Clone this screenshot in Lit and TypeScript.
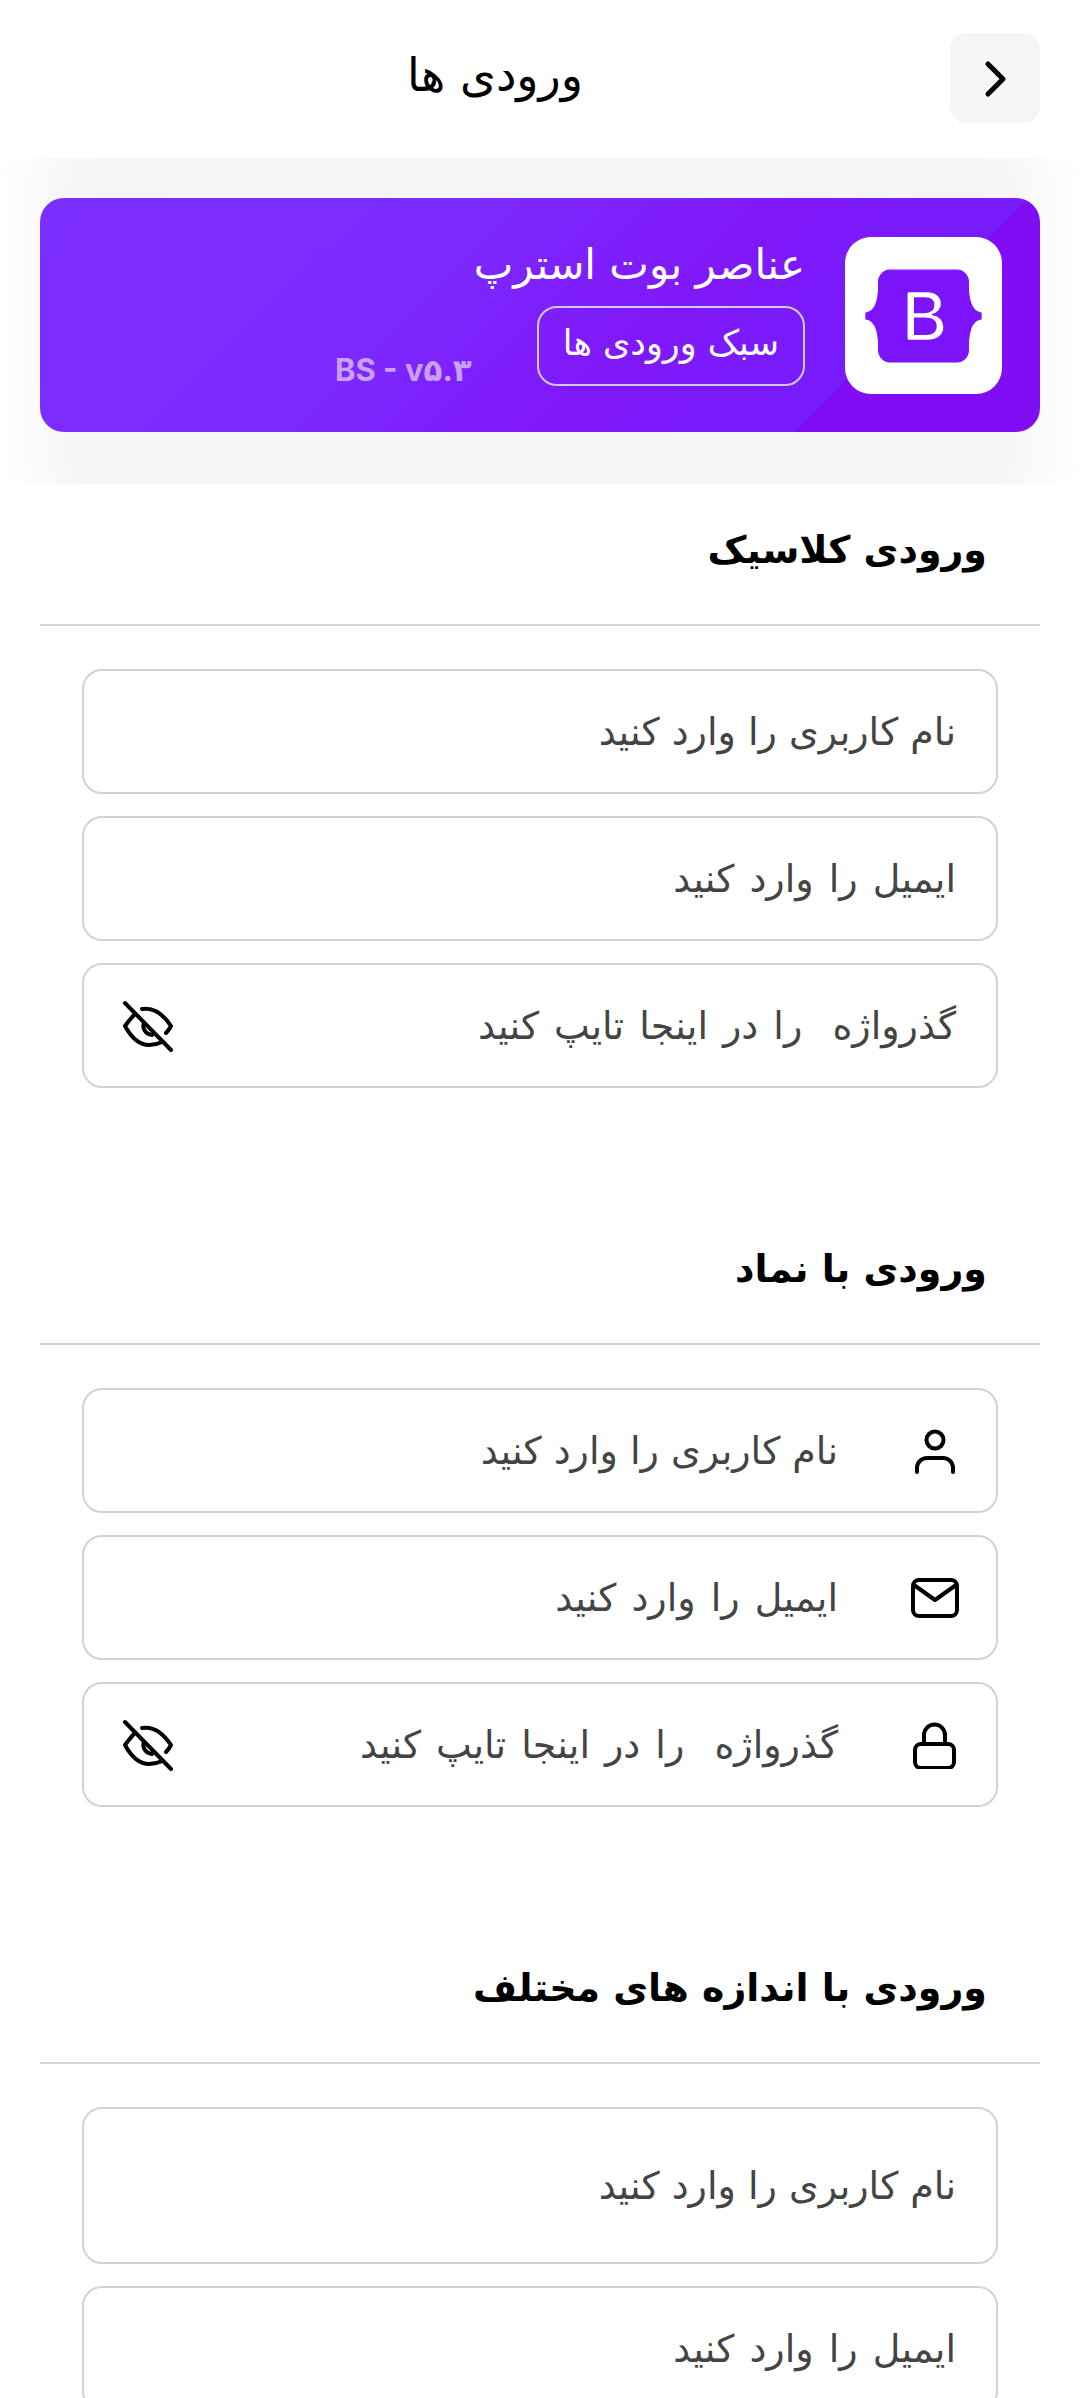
import { LitElement, html, css, svg } from 'lit';
import { customElement } from 'lit/decorators.js';

const icons = {
  user: svg`<circle cx="24" cy="13" r="8.5"/><path d="M6 45v-4a10 10 0 0 1 10-10h16a10 10 0 0 1 10 10v4"/>`,
  mail: svg`<rect x="2" y="6" width="44" height="36" rx="6"/><path d="M3 11l21 15 21-15"/>`,
  lock: svg`<rect x="4" y="23" width="39" height="24" rx="6"/><path d="M13 23v-9a10.500 10.500 0 0 1 21 0v9"/>`,
};

const eyeOff = svg`<path d="M20 9C31 7 41 14 49 26C48 28 46 31 44 33"/><path d="M12 15C9 18 6 22 3 26C9 37 17 45 27 45C32 45 36 44 40 42"/><path d="M22 23C20 28 23 34 30 35"/><path d="M3 3L49 50"/>`;

const sections = [
  {
    title: 'ورودی کلاسیک',
    fields: [
      { text: 'نام کاربری را وارد کنید' },
      { text: 'ایمیل را وارد کنید', wide: true },
      { text: 'گذرواژه  را در اینجا تایپ کنید', wide: true, eye: true },
    ],
  },
  {
    title: 'ورودی با نماد',
    fields: [
      { text: 'نام کاربری را وارد کنید', icon: 'user' },
      { text: 'ایمیل را وارد کنید', wide: true, icon: 'mail' },
      { text: 'گذرواژه  را در اینجا تایپ کنید', wide: true, icon: 'lock', eye: true },
    ],
  },
  {
    title: 'ورودی با اندازه های مختلف',
    fields: [
      { text: 'نام کاربری را وارد کنید', large: true },
      { text: 'ایمیل را وارد کنید', wide: true },
    ],
  },
];

@customElement('app-root')
export class AppRoot extends LitElement {
  static styles = css`
    :host {
      display: block;
      height: 2398px;
      overflow: hidden;
      background: #fff;
      font-family: "DejaVu Sans", sans-serif;
      color: #000;
    }

    .top {
      height: 158px;
      box-sizing: border-box;
      padding: 33px 40px 0;
      display: flex;
      align-items: flex-start;
    }
    .back {
      width: 90px;
      height: 90px;
      border-radius: 16px;
      background: #f5f5f5;
      display: flex;
      align-items: center;
      justify-content: center;
    }
    .back svg {
      width: 30px;
      height: 44px;
      fill: none;
      stroke: #000;
      stroke-width: 5;
      stroke-linecap: round;
      stroke-linejoin: round;
    }
    .page-title {
      flex: 1;
      text-align: center;
      font-size: 46px;
      line-height: 84px;
    }

    .banner {
      position: relative;
      height: 326px;
      box-sizing: border-box;
      padding: 40px 40px 0;
      overflow: hidden;
    }
    .banner::before {
      content: "";
      position: absolute;
      left: 40px;
      right: 40px;
      top: -30px;
      bottom: -30px;
      background: #f5f5f5;
      border-radius: 40px;
      filter: blur(26px);
    }
    .card {
      position: relative;
      height: 234px;
      box-sizing: border-box;
      padding: 39px 38px 0;
      border-radius: 24px;
      background: linear-gradient(135deg, #7c2dff 0%, #7b2bff 35%, #8018f9 60%, #761cfd 80%, #800df3 80%);
      display: flex;
      color: #fff;
    }
    .logo {
      width: 157px;
      height: 157px;
      border-radius: 26px;
      background: #fff;
      display: flex;
      align-items: center;
      justify-content: center;
      flex-shrink: 0;
    }
    .logo svg {
      width: 115px;
      height: 92px;
      overflow: visible;
      fill: #7b14fb;
      stroke: #7b14fb;
      stroke-width: 6;
    }
    .info {
      margin-right: 40px;
      display: flex;
      flex-direction: column;
      align-items: flex-start;
    }
    .name {
      font-size: 42px;
      line-height: 56px;
      margin-bottom: 13px;
    }
    .tag {
      height: 80px;
      box-sizing: border-box;
      padding: 0 24px;
      border: 2px solid #d0c8dc;
      border-radius: 20px;
      font-size: 35px;
      line-height: 70px;
    }
    .version {
      align-self: flex-end;
      margin: 0 2px 43px 0;
      font-family: Inter, "DejaVu Sans", sans-serif;
      font-weight: 700;
      font-size: 31px;
      line-height: 38px;
      color: #c9a0ff;
    }

    .section {
      padding-bottom: 115px;
    }
    .section-head {
      height: 142px;
      box-sizing: border-box;
      margin: 0 40px;
      padding: 0 53px 8px;
      border-bottom: 2px solid #d4d4d4;
      display: flex;
      align-items: center;
      font-size: 38px;
      font-weight: 700;
    }
    .fields {
      padding: 43px 82px 0;
      display: flex;
      flex-direction: column;
      gap: 22px;
    }
    .field {
      height: 125px;
      box-sizing: border-box;
      padding: 0 40px;
      border: 2px solid #d2d2d2;
      border-radius: 20px;
      display: flex;
      align-items: center;
      font-size: 38px;
      color: #444;
      white-space: pre;
    }
    .field.large {
      height: 157px;
    }
    .field.wide {
      word-spacing: 3px;
    }
    .slot {
      width: 118px;
      flex-shrink: 0;
      display: flex;
    }
    .slot svg {
      width: 48px;
      height: 48px;
      margin-right: -3px;
    }
    .eye {
      width: 52px;
      height: 52px;
      margin-right: auto;
      margin-left: -2px;
      flex-shrink: 0;
    }
    svg.line {
      fill: none;
      stroke: #000;
      stroke-width: 4;
      stroke-linecap: round;
      stroke-linejoin: round;
    }
  `;

  renderField(f: { text: string; icon?: string; eye?: boolean; large?: boolean; wide?: boolean }) {
    return html`
      <div class="field ${f.large ? 'large' : ''} ${f.wide ? 'wide' : ''}">
        ${f.icon
          ? html`<div class="slot"><svg class="line" viewBox="0 0 48 48">${icons[f.icon as keyof typeof icons]}</svg></div>`
          : ''}
        <span>${f.text}</span>
        ${f.eye ? html`<svg class="line eye" viewBox="0 0 52 52">${eyeOff}</svg>` : ''}
      </div>
    `;
  }

  render() {
    return html`
      <div dir="rtl">
        <div class="top">
          <div class="back">
            <svg viewBox="0 0 30 44"><path d="M8 8l15 15L8 38"/></svg>
          </div>
          <div class="page-title">ورودی ها</div>
        </div>

        <div class="banner">
          <div class="card">
            <div class="logo">
              <svg viewBox="0 0 512 408">
                <path fill-rule="evenodd" d="M106.342 0c-29.214 0-50.83 25.57-49.863 53.3.929 26.641-.278 61.145-8.964 89.283-8.715 28.217-23.449 46.098-47.515 48.393v25.948c24.066 2.295 38.8 20.175 47.515 48.392 8.686 28.139 9.893 62.643 8.964 89.284-.967 27.726 20.65 53.3 49.863 53.3h299.361c29.214 0 50.83-25.57 49.863-53.3-.929-26.641.278-61.145 8.964-89.284 8.715-28.217 23.449-46.097 47.515-48.392v-25.948c-24.066-2.295-38.8-20.176-47.515-48.393-8.686-28.138-9.893-62.642-8.964-89.283C456.533 25.57 434.917 0 405.703 0H106.342zm240.79 251.432c0 38.232-28.517 61.418-75.842 61.418h-80.56a8.672 8.672 0 0 1-8.672-8.672V103.822a8.672 8.672 0 0 1 8.672-8.672h80.101c39.46 0 65.359 21.374 65.359 54.192 0 23.033-17.419 43.654-39.613 47.265v1.203c30.212 3.314 50.555 24.23 50.555 53.622zm-84.632-128.03h-45.935v65.006h38.689c29.91 0 46.402-12.045 46.402-33.57 0-20.171-14.18-31.436-39.156-31.436zm-45.935 90.8v71.64h47.625c31.138 0 47.632-12.494 47.632-35.975 0-23.48-16.956-35.665-49.636-35.665h-45.621z"/>
              </svg>
            </div>
            <div class="info">
              <div class="name">عناصر بوت استرپ</div>
              <div class="tag">سبک ورودی ها</div>
            </div>
            <div class="version" dir="ltr">BS - v۵.۳</div>
          </div>
        </div>

        ${sections.map(
          (s) => html`
            <div class="section">
              <div class="section-head">${s.title}</div>
              <div class="fields">${s.fields.map((f) => this.renderField(f))}</div>
            </div>
          `
        )}
      </div>
    `;
  }
}
